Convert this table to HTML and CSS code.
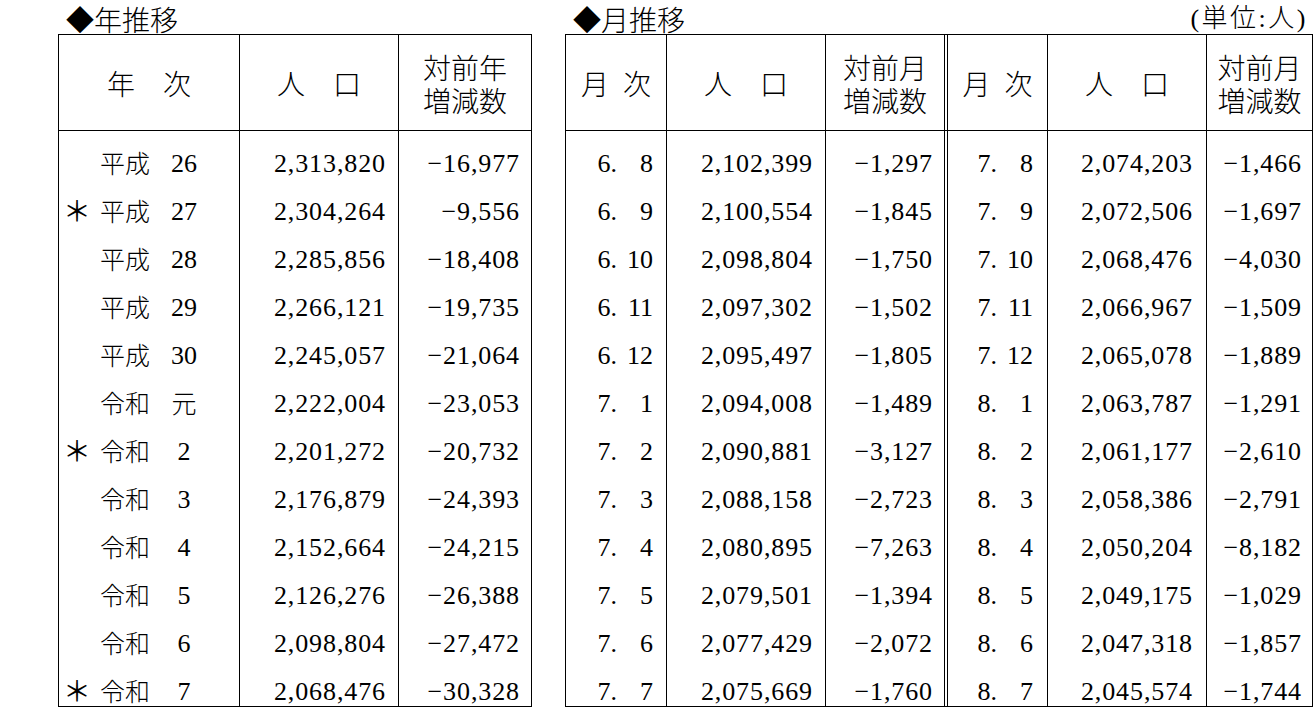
FILE: index.html
```html
<!DOCTYPE html>
<html lang="ja">
<head>
<meta charset="utf-8">
<title>人口推移</title>
<link rel="stylesheet" href="styles.css">
</head>
<body>
<div class="page">
  <section class="block">
    <div class="cap"><h2 class="title">◆年推移</h2></div>
    <div class="tbl">
      <div class="row head">
        <div class="c y1 h">年　次</div>
        <div class="c y2 h">人　口</div>
        <div class="c y3 h">対前年<br>増減数</div>
      </div>
      <div class="row first"><div class="c y1 yr"><span class="ast"></span><span class="era">平成</span><span class="yn">26</span></div><div class="c y2 n">2,313,820</div><div class="c y3 n">−16,977</div></div>
      <div class="row"><div class="c y1 yr"><span class="ast">＊</span><span class="era">平成</span><span class="yn">27</span></div><div class="c y2 n">2,304,264</div><div class="c y3 n">−9,556</div></div>
      <div class="row"><div class="c y1 yr"><span class="ast"></span><span class="era">平成</span><span class="yn">28</span></div><div class="c y2 n">2,285,856</div><div class="c y3 n">−18,408</div></div>
      <div class="row"><div class="c y1 yr"><span class="ast"></span><span class="era">平成</span><span class="yn">29</span></div><div class="c y2 n">2,266,121</div><div class="c y3 n">−19,735</div></div>
      <div class="row"><div class="c y1 yr"><span class="ast"></span><span class="era">平成</span><span class="yn">30</span></div><div class="c y2 n">2,245,057</div><div class="c y3 n">−21,064</div></div>
      <div class="row"><div class="c y1 yr"><span class="ast"></span><span class="era">令和</span><span class="yn jp">元</span></div><div class="c y2 n">2,222,004</div><div class="c y3 n">−23,053</div></div>
      <div class="row"><div class="c y1 yr"><span class="ast">＊</span><span class="era">令和</span><span class="yn">2</span></div><div class="c y2 n">2,201,272</div><div class="c y3 n">−20,732</div></div>
      <div class="row"><div class="c y1 yr"><span class="ast"></span><span class="era">令和</span><span class="yn">3</span></div><div class="c y2 n">2,176,879</div><div class="c y3 n">−24,393</div></div>
      <div class="row"><div class="c y1 yr"><span class="ast"></span><span class="era">令和</span><span class="yn">4</span></div><div class="c y2 n">2,152,664</div><div class="c y3 n">−24,215</div></div>
      <div class="row"><div class="c y1 yr"><span class="ast"></span><span class="era">令和</span><span class="yn">5</span></div><div class="c y2 n">2,126,276</div><div class="c y3 n">−26,388</div></div>
      <div class="row"><div class="c y1 yr"><span class="ast"></span><span class="era">令和</span><span class="yn">6</span></div><div class="c y2 n">2,098,804</div><div class="c y3 n">−27,472</div></div>
      <div class="row"><div class="c y1 yr"><span class="ast">＊</span><span class="era">令和</span><span class="yn">7</span></div><div class="c y2 n">2,068,476</div><div class="c y3 n">−30,328</div></div>
    </div>
  </section>

  <section class="block">
    <div class="cap"><h2 class="title">◆月推移</h2><span class="unit">(単位:人)</span></div>
    <div class="tbl">
      <div class="row head">
        <div class="c m1 h">月&ensp;次</div>
        <div class="c m2 h">人　口</div>
        <div class="c m3 h">対前月<br>増減数</div>
        <div class="c m4 h">月&ensp;次</div>
        <div class="c m5 h">人　口</div>
        <div class="c m6 h">対前月<br>増減数</div>
      </div>
      <div class="row first"><div class="c m1 md">6.<span class="mm">8</span></div><div class="c m2 n">2,102,399</div><div class="c m3 n">−1,297</div><div class="c m4 md">7.<span class="mm">8</span></div><div class="c m5 n">2,074,203</div><div class="c m6 n">−1,466</div></div>
      <div class="row"><div class="c m1 md">6.<span class="mm">9</span></div><div class="c m2 n">2,100,554</div><div class="c m3 n">−1,845</div><div class="c m4 md">7.<span class="mm">9</span></div><div class="c m5 n">2,072,506</div><div class="c m6 n">−1,697</div></div>
      <div class="row"><div class="c m1 md">6.<span class="mm">10</span></div><div class="c m2 n">2,098,804</div><div class="c m3 n">−1,750</div><div class="c m4 md">7.<span class="mm">10</span></div><div class="c m5 n">2,068,476</div><div class="c m6 n">−4,030</div></div>
      <div class="row"><div class="c m1 md">6.<span class="mm">11</span></div><div class="c m2 n">2,097,302</div><div class="c m3 n">−1,502</div><div class="c m4 md">7.<span class="mm">11</span></div><div class="c m5 n">2,066,967</div><div class="c m6 n">−1,509</div></div>
      <div class="row"><div class="c m1 md">6.<span class="mm">12</span></div><div class="c m2 n">2,095,497</div><div class="c m3 n">−1,805</div><div class="c m4 md">7.<span class="mm">12</span></div><div class="c m5 n">2,065,078</div><div class="c m6 n">−1,889</div></div>
      <div class="row"><div class="c m1 md">7.<span class="mm">1</span></div><div class="c m2 n">2,094,008</div><div class="c m3 n">−1,489</div><div class="c m4 md">8.<span class="mm">1</span></div><div class="c m5 n">2,063,787</div><div class="c m6 n">−1,291</div></div>
      <div class="row"><div class="c m1 md">7.<span class="mm">2</span></div><div class="c m2 n">2,090,881</div><div class="c m3 n">−3,127</div><div class="c m4 md">8.<span class="mm">2</span></div><div class="c m5 n">2,061,177</div><div class="c m6 n">−2,610</div></div>
      <div class="row"><div class="c m1 md">7.<span class="mm">3</span></div><div class="c m2 n">2,088,158</div><div class="c m3 n">−2,723</div><div class="c m4 md">8.<span class="mm">3</span></div><div class="c m5 n">2,058,386</div><div class="c m6 n">−2,791</div></div>
      <div class="row"><div class="c m1 md">7.<span class="mm">4</span></div><div class="c m2 n">2,080,895</div><div class="c m3 n">−7,263</div><div class="c m4 md">8.<span class="mm">4</span></div><div class="c m5 n">2,050,204</div><div class="c m6 n">−8,182</div></div>
      <div class="row"><div class="c m1 md">7.<span class="mm">5</span></div><div class="c m2 n">2,079,501</div><div class="c m3 n">−1,394</div><div class="c m4 md">8.<span class="mm">5</span></div><div class="c m5 n">2,049,175</div><div class="c m6 n">−1,029</div></div>
      <div class="row"><div class="c m1 md">7.<span class="mm">6</span></div><div class="c m2 n">2,077,429</div><div class="c m3 n">−2,072</div><div class="c m4 md">8.<span class="mm">6</span></div><div class="c m5 n">2,047,318</div><div class="c m6 n">−1,857</div></div>
      <div class="row"><div class="c m1 md">7.<span class="mm">7</span></div><div class="c m2 n">2,075,669</div><div class="c m3 n">−1,760</div><div class="c m4 md">8.<span class="mm">7</span></div><div class="c m5 n">2,045,574</div><div class="c m6 n">−1,744</div></div>
    </div>
  </section>
</div>
</body>
</html>
```

FILE: styles.css
```css
html, body {
  margin: 0;
  padding: 0;
  background: #fff;
  color: #000;
}

body {
  font-family: "Liberation Serif", "Noto Sans CJK JP", serif;
  font-size: 26px;
}

.jp {
  font-family: "Noto Sans CJK JP", sans-serif;
  font-size: 25px;
  font-weight: 300;
  line-height: 1;
  padding-bottom: 4px;
}

.page {
  display: flex;
  align-items: flex-start;
  gap: 33px;
  padding-left: 58px;
}

.block {
  display: flex;
  flex-direction: column;
}

.cap {
  height: 34px;
  display: flex;
  align-items: center;
  padding-top: 4px;
  box-sizing: border-box;
  font-family: "Noto Sans CJK JP", sans-serif;
}

.title {
  margin: 0;
  padding-left: 8px;
  font-size: 28px;
  font-weight: 300;
  line-height: 30px;
}

.unit {
  margin-left: auto;
  padding-right: 5px;
  font-family: "Liberation Serif", "Noto Sans CJK JP", serif;
  font-size: 26px;
  font-weight: 300;
  letter-spacing: 2.5px;
  line-height: 30px;
}

.tbl {
  border: 1px solid #000;
  box-sizing: border-box;
  height: 673px;
  overflow: hidden;
}

.row {
  display: flex;
  height: 48px;
}

.row.head {
  height: 96px;
  border-bottom: 1px solid #000;
  box-sizing: border-box;
}

.row.first {
  height: 57px;
}

.row.first > .c {
  padding-top: 9px;
}

.c {
  box-sizing: border-box;
  display: flex;
  align-items: center;
  border-right: 1px solid #000;
  white-space: nowrap;
  letter-spacing: 0.9px;
}

/* year table columns */
.y1 { width: 181px; }
.y2 { width: 159px; padding-right: 12px; }
.y3 { width: 132px; border-right: 0; padding-right: 11px; }

/* month table columns */
.m1 { width: 101px; padding-right: 13px; }
.m2 { width: 159px; padding-right: 12px; }
.m3 { width: 119px; padding-right: 11px; }
.m4 { width: 101px; margin-left: 2px; border-left: 1px solid #000; padding-right: 14px; }
.m5 { width: 159px; padding-right: 13px; }
.m6 { width: 105px; border-right: 0; padding-right: 10px; }

.h {
  justify-content: center;
  text-align: center;
  font-family: "Noto Sans CJK JP", sans-serif;
  font-size: 28px;
  font-weight: 300;
  line-height: 33.5px;
  letter-spacing: 0;
  padding: 3px 0 0 0;
}

.n {
  justify-content: flex-end;
}

.md {
  justify-content: flex-end;
  letter-spacing: 0;
}

.mm {
  display: inline-block;
  width: 36px;
  text-align: right;
}

.yr {
  letter-spacing: 0;
}

.ast {
  box-sizing: border-box;
  width: 41px;
  padding-left: 4px;
  padding-bottom: 4px;
  text-align: left;
  font-family: "Noto Sans CJK JP", sans-serif;
  font-size: 28px;
  line-height: 1;
}

.era {
  width: 68px;
  padding-bottom: 4px;
  font-family: "Noto Sans CJK JP", sans-serif;
  font-size: 25px;
  font-weight: 300;
  line-height: 1;
}

.yn {
  width: 32px;
  text-align: center;
}
```
